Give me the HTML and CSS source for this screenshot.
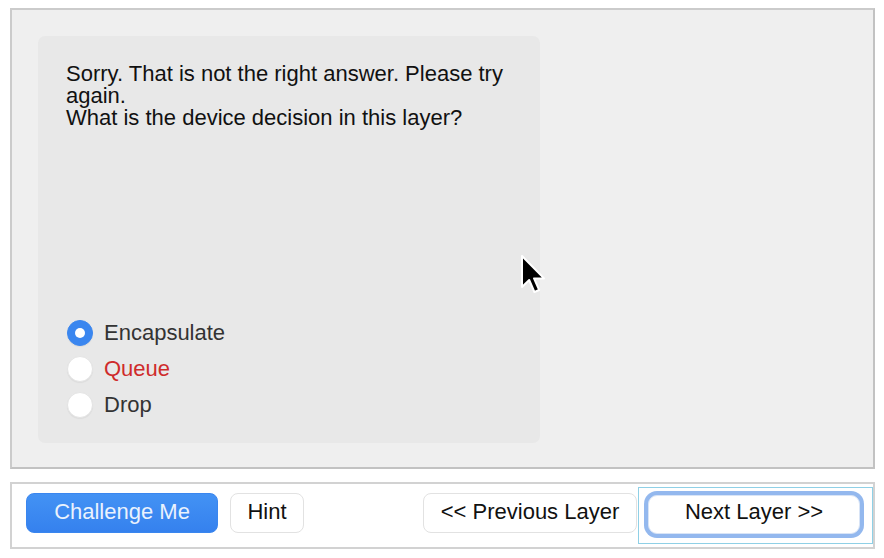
FILE: index.html
```html
<!DOCTYPE html>
<html>
<head>
<meta charset="utf-8">
<link rel="stylesheet" href="styles.css">
</head>
<body>
<div class="stage">
  <div class="card">
    <p class="question">Sorry. That is not the right answer. Please try again.<br>What is the device decision in this layer?</p>
    <div class="options">
      <label class="opt"><span class="radio checked"></span><span class="lbl">Encapsulate</span></label>
      <label class="opt"><span class="radio"></span><span class="lbl wrong">Queue</span></label>
      <label class="opt"><span class="radio"></span><span class="lbl">Drop</span></label>
    </div>
  </div>
</div>
<div class="bar">
  <button class="btn primary">Challenge Me</button>
  <button class="btn hint">Hint</button>
  <div class="nav">
    <button class="btn prev">&lt;&lt; Previous Layer</button>
    <div class="focusbox"><button class="btn next">Next Layer &gt;&gt;</button></div>
  </div>
</div>
<svg class="cursor" width="26" height="40" viewBox="0 0 13 20">
  <path d="M1 1 L1 16.5 L4.6 13 L7.2 19 L9.6 18 L7 12.2 L12 12.2 Z" fill="#000" stroke="#fff" stroke-width="1" stroke-linejoin="round"/>
</svg>
</body>
</html>
```
FILE: styles.css
```css
html, body {
  margin: 0;
  padding: 0;
  background: #ffffff;
  font-family: "Liberation Sans", Arial, Helvetica, sans-serif;
}
body {
  width: 884px;
  height: 558px;
  position: relative;
  overflow: hidden;
}
.stage {
  box-sizing: border-box;
  margin: 8px 0 0 10px;
  width: 865px;
  height: 461px;
  border: 2px solid #cbcbcb;
  border-bottom-color: #c2c2c2;
  border-right-color: #c2c2c2;
  background: #efefef;
  padding: 26px 0 0 26px;
}
.card {
  box-sizing: border-box;
  width: 502px;
  height: 407px;
  background: #e8e8e8;
  border-radius: 7px;
  padding: 27px 20px 20px 28px;
  display: flex;
  flex-direction: column;
}
.question {
  margin: 0;
  font-size: 22px;
  line-height: 22px;
  color: #111111;
}
.options {
  margin-top: auto;
  display: flex;
  flex-direction: column;
}
.opt {
  display: flex;
  align-items: center;
  height: 36px;
  gap: 11px;
  padding-left: 1px;
}
.radio {
  box-sizing: border-box;
  width: 26px;
  height: 26px;
  border-radius: 50%;
  background: #ffffff;
  border: 1px solid #e4e4e4;
  box-shadow: 0 1px 1px rgba(0, 0, 0, 0.05);
  display: flex;
  align-items: center;
  justify-content: center;
}
.radio.checked {
  background: #3a86ef;
  border-color: #3a86ef;
}
.radio.checked::after {
  content: "";
  width: 10px;
  height: 10px;
  border-radius: 50%;
  background: #ffffff;
}
.lbl {
  font-size: 22px;
  color: #333333;
}
.lbl.wrong {
  color: #cf2b2b;
}
.bar {
  box-sizing: border-box;
  margin: 13px 0 0 10px;
  width: 865px;
  height: 67px;
  border: 2px solid #d2d2d2;
  background: #ffffff;
  display: flex;
  align-items: flex-start;
  padding-left: 14px;
}
.btn {
  box-sizing: border-box;
  height: 40px;
  margin-top: 9px;
  font-family: "Liberation Sans", Arial, Helvetica, sans-serif;
  font-size: 22px;
  border-radius: 8px;
  border: 1px solid #e2e2e2;
  background: #ffffff;
  color: #111111;
  padding: 0 0 2px 0;
}
.primary {
  width: 192px;
  background: linear-gradient(#4392f4, #3581ee);
  border-color: #3a86ef;
  color: #eaf2fd;
}
.hint {
  width: 74px;
  margin-left: 12px;
}
.nav {
  margin-left: auto;
  display: flex;
  align-items: flex-start;
  gap: 1px;
}
.prev {
  width: 214px;
}
.focusbox {
  box-sizing: border-box;
  width: 235px;
  height: 57px;
  margin-top: 3px;
  border: 1px solid #8fd0e6;
  padding: 7px 12px 0 9px;
}
.next {
  width: 212px;
  height: 39px;
  margin-top: 0;
  padding-bottom: 5px;
  border-radius: 9px;
  border: 1px solid #d8e4f6;
  box-shadow: 0 0 0 4px #93b8ee;
}
.cursor {
  position: absolute;
  left: 520px;
  top: 254px;
}
```
